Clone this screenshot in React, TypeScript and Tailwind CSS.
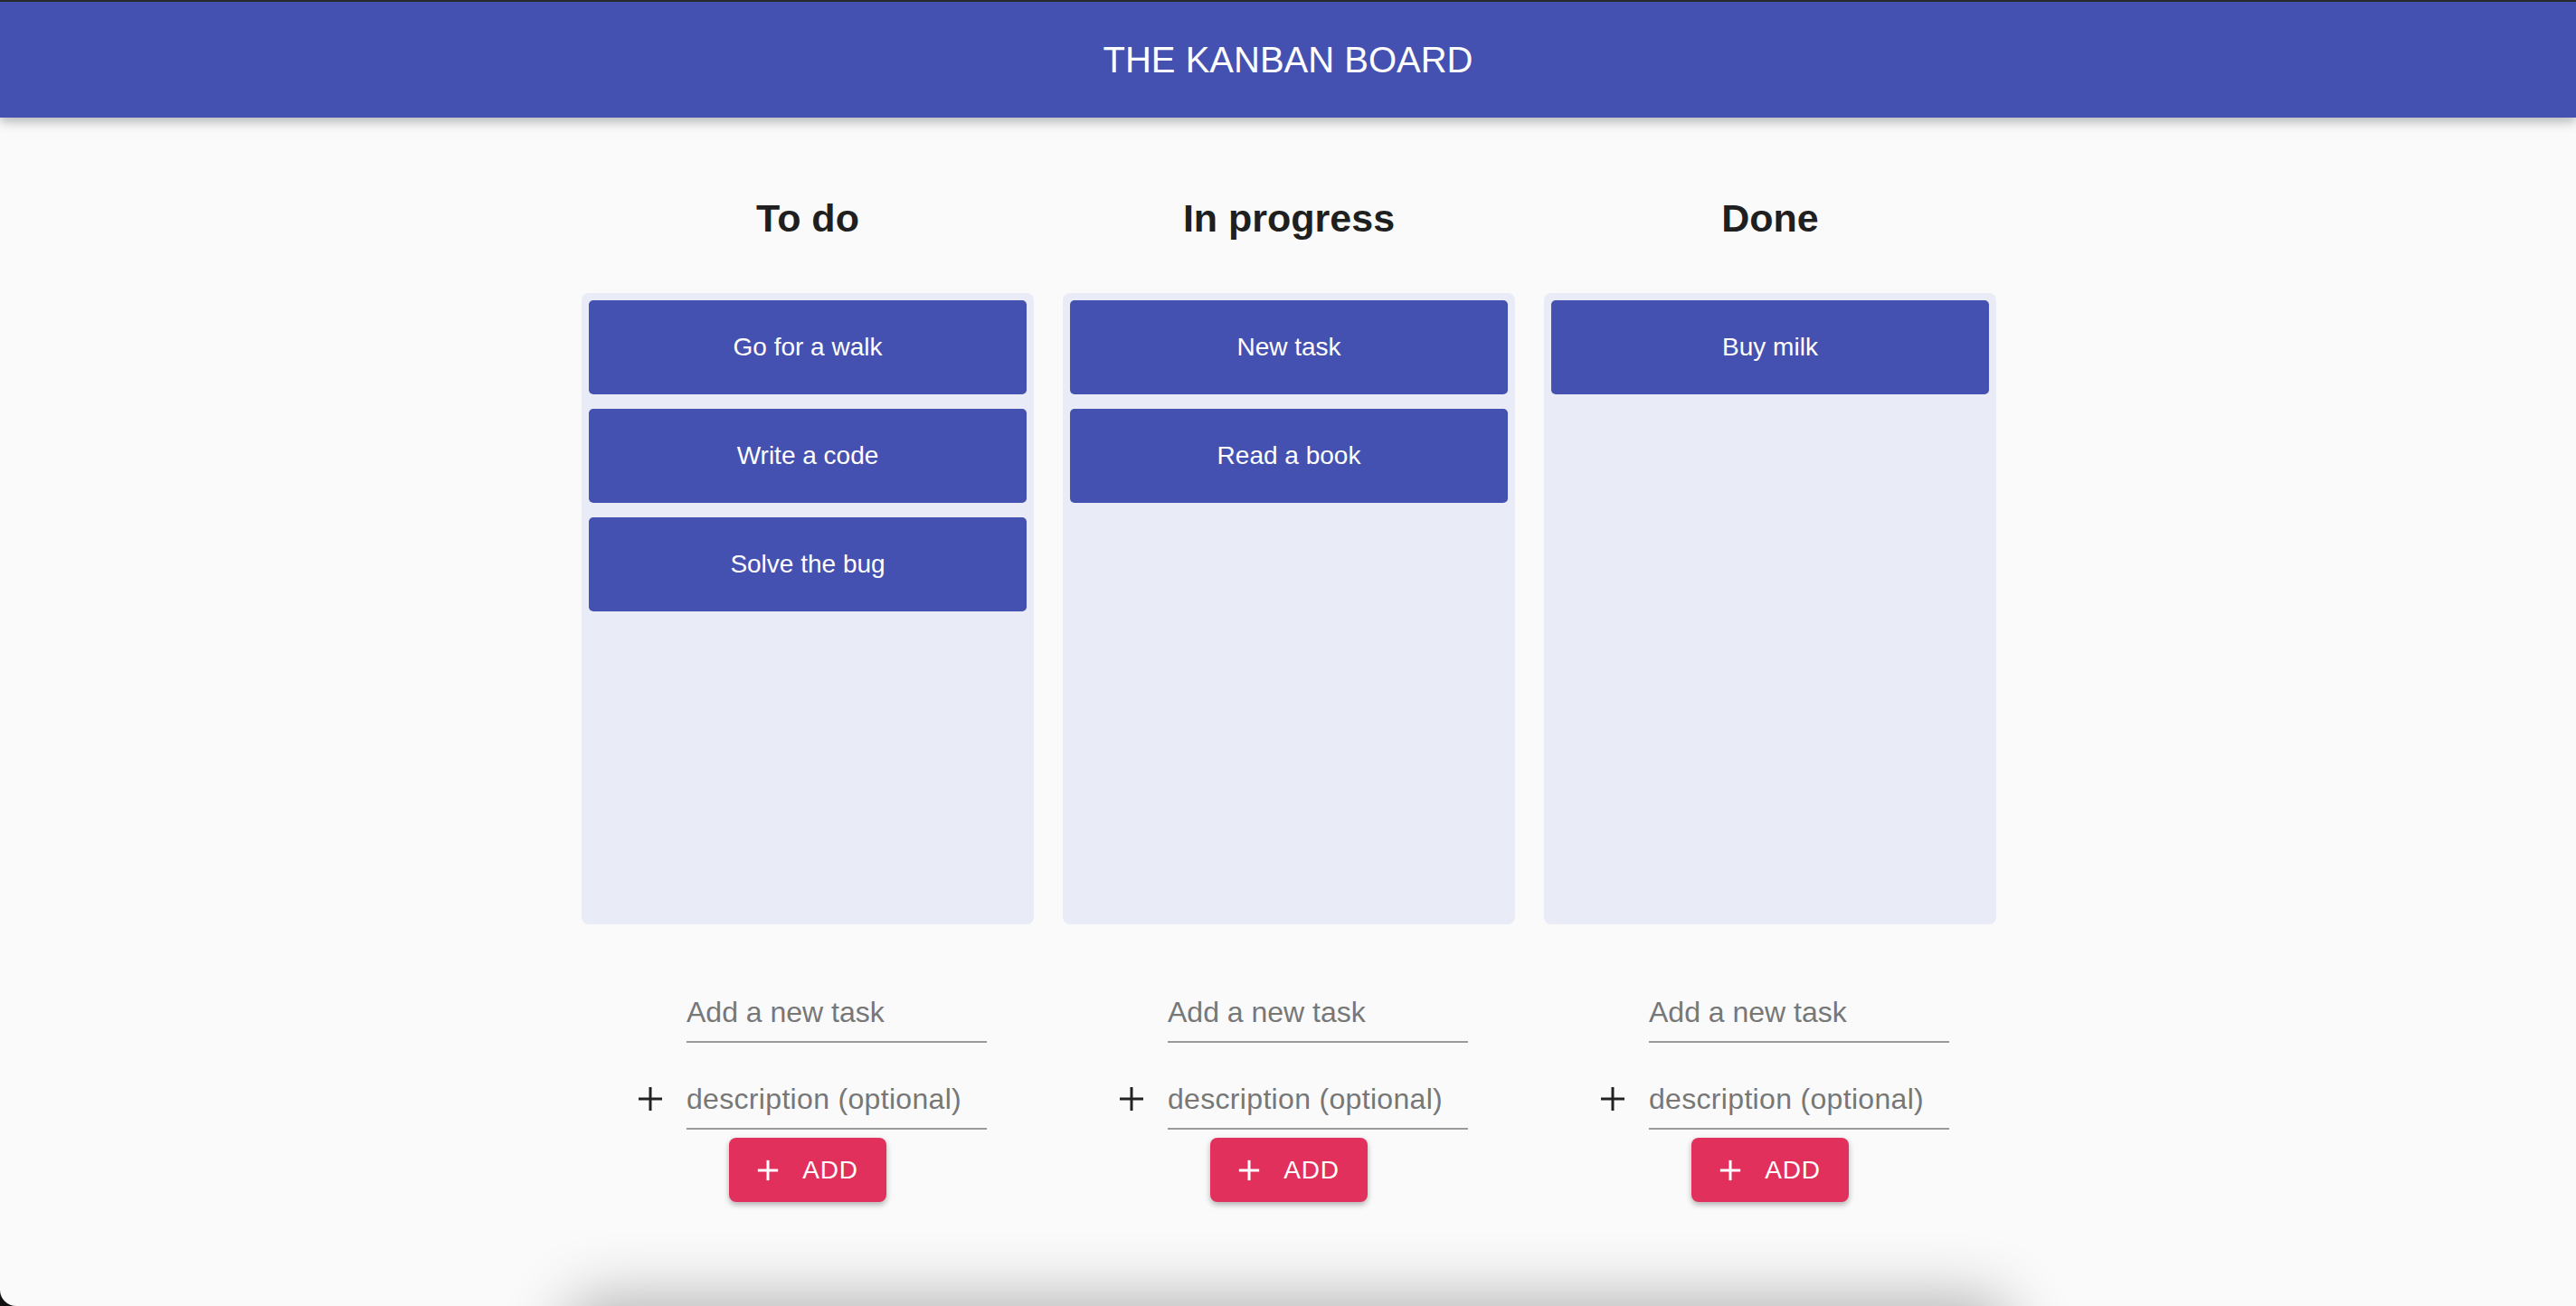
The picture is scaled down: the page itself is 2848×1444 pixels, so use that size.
import React from "react";

type Column = { title: string; tasks: string[] };

const columns: Column[] = [
  { title: "To do", tasks: ["Go for a walk", "Write a code", "Solve the bug"] },
  { title: "In progress", tasks: ["New task", "Read a book"] },
  { title: "Done", tasks: ["Buy milk"] },
];

const PlusIcon = ({ size, stroke, color }: { size: number; stroke: number; color: string }) => (
  <svg width={size} height={size} viewBox="0 0 28 28" fill="none">
    <line x1="14" y1="1" x2="14" y2="27" stroke={color} strokeWidth={stroke} />
    <line x1="1" y1="14" x2="27" y2="14" stroke={color} strokeWidth={stroke} />
  </svg>
);

const TaskCard = ({ title }: { title: string }) => (
  <div className="h-[104px] w-full flex items-center justify-center rounded-[5px] bg-[#4451b1] text-white text-[28px] leading-none">
    {title}
  </div>
);

const AddForm = () => (
  <div className="flex flex-col items-center">
    <div className="flex flex-col pl-[10px]">
      <div className="flex items-center gap-[26px] mt-[81px]">
        <div className="w-[28px]" />
        <div className="w-[332px] pb-[16px] border-b-2 border-[#9a9a9a] text-[32px] leading-[32px] text-[#777]">
          Add a new task
        </div>
      </div>
      <div className="flex items-start gap-[26px] mt-[46px]">
        <div className="w-[28px] h-[32px] flex items-center">
          <PlusIcon size={28} stroke={3} color="#222" />
        </div>
        <div className="w-[332px] pb-[16px] border-b-2 border-[#9a9a9a] text-[32px] leading-[32px] text-[#777] tracking-[0.01em]">
          description (optional)
        </div>
      </div>
    </div>
    <button className="mt-[9px] w-[174px] h-[71px] rounded-[8px] bg-[#e2305c] text-white flex items-center justify-center gap-[26px] shadow-[0_3px_6px_rgba(0,0,0,0.3)] text-[28px] leading-none tracking-[0.03em]">
      <PlusIcon size={24} stroke={3.5} color="#fff" />
      <span>ADD</span>
    </button>
  </div>
);

const ColumnView = ({ column }: { column: Column }) => (
  <div className="w-[500px] flex flex-col">
    <h2 className="text-center text-[43px] leading-[53px] font-bold text-[#1f1f1f]">{column.title}</h2>
    <div className="mt-[56px] h-[698px] rounded-[8px] bg-[#e9ebf7] p-[8px] flex flex-col gap-[16px]">
      {column.tasks.map((t) => (
        <TaskCard key={t} title={t} />
      ))}
    </div>
    <AddForm />
  </div>
);

export default function App() {
  return (
    <div className="bg-[#111] w-full h-[1444px] overflow-hidden" style={{ fontFamily: '"Liberation Sans", Arial, sans-serif' }}>
      <div className="relative h-full bg-[#fafafa] rounded-bl-[18px] overflow-hidden flex flex-col">
        <header className="relative z-10 h-[130px] shrink-0 border-t-2 border-[#2a2a2a] bg-[#4451b1] flex items-center justify-center shadow-[0_4px_12px_rgba(0,0,0,0.3)]">
          <h1 className="text-white text-[40px] leading-none">THE KANBAN BOARD</h1>
        </header>
        <main className="flex justify-center gap-[32px] pt-[85px] pl-[2px]">
          {columns.map((c) => (
            <ColumnView key={c.title} column={c} />
          ))}
        </main>
        <div className="mx-auto mt-[118px] w-[1600px] h-[200px] shrink-0 rounded-[40px] bg-white shadow-[0_-10px_70px_rgba(0,0,0,0.3)]" />
      </div>
    </div>
  );
}
